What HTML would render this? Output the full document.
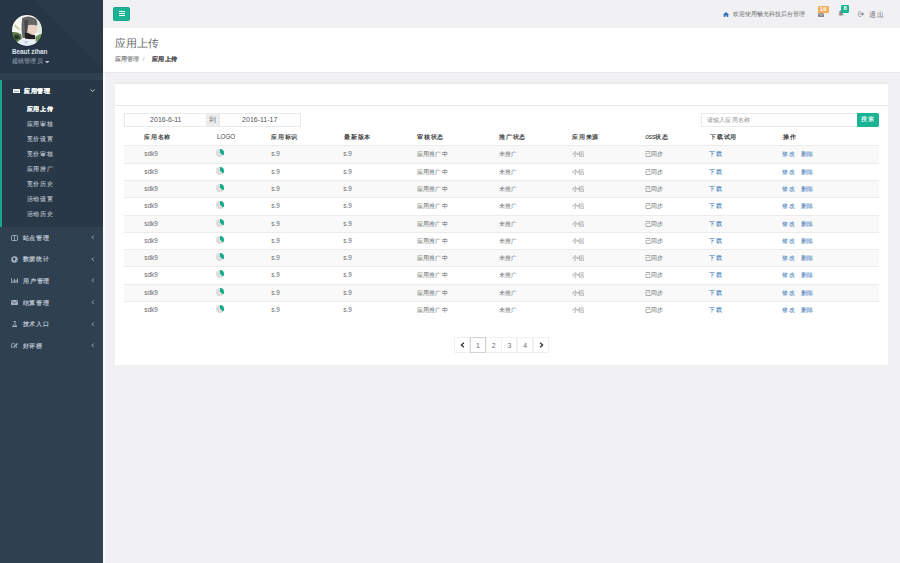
<!DOCTYPE html>
<html><head><meta charset="utf-8">
<style>
*{box-sizing:border-box;margin:0;padding:0}
html,body{width:900px;height:563px;overflow:hidden;background:#f1f1f3;font-family:"Liberation Sans",sans-serif;color:#676a6c;font-size:7px}
#side{position:absolute;left:0;top:0;width:103px;height:563px;background:#2f4050}
#hdr{position:absolute;left:0;top:0;width:103px;height:73px;background:linear-gradient(45deg,#263646 61%,#2a3a4a 61.5%);overflow:hidden}
#avatar{position:absolute;left:11.5px;top:15px;width:30.5px;height:30.5px;border-radius:50%;overflow:hidden;box-shadow:0 0 0 0.6px #1c2834}
#uname{position:absolute;left:12px;top:48px;color:#dfe4ed;font-size:6.3px;font-weight:bold;line-height:8px}
#urole{position:absolute;left:12px;top:57px;color:#aab3c0;font-size:6.1px;line-height:8px;letter-spacing:0.15px}
#menu{position:absolute;left:0;top:80px;width:103px}
.act{background:#293846;border-left:2px solid #19aa8d;height:146.5px;position:relative}
.mi{position:absolute;left:0;width:103px;height:10px;color:#bfc7d3;font-size:6.4px;font-weight:bold;line-height:10px}
.mi .t{position:absolute;left:22.6px;top:0.4px;font-size:5.9px;letter-spacing:0.65px}
.mi .ar{position:absolute}
.sub{position:absolute;left:26.7px;color:#bfc7d3;font-size:5.9px;line-height:10px;margin-top:-0.8px;letter-spacing:0.65px;-webkit-text-stroke:0.1px #bfc7d3}
#nav{position:absolute;left:103px;top:0;right:0;height:28px;background:#f1f1f3}
#tbtn{position:absolute;left:9.5px;top:6.5px;width:17.6px;height:14px;background:#1ab394;border:0.6px solid #17a386;border-radius:1.6px}
#tbtn i{position:absolute;left:5.3px;width:6px;height:0.9px;background:#fff}
#ph{position:absolute;left:103px;top:28px;right:0;height:44.9px;background:#fff;border-bottom:1px solid #e7eaec}
#ph h2{position:absolute;left:12px;top:7.8px;font-size:10.8px;font-weight:normal;color:#676a6c;line-height:14px}
#bc{position:absolute;left:12px;top:55.7px;font-size:6px;line-height:8px;color:#5a5c5e;-webkit-text-stroke:0.08px #5a5c5e}
#ibox{position:absolute;left:114.5px;top:82px;width:773.5px;height:283px;background:#fff;border-top:2px solid #e9ebed}
#ibt{position:absolute;left:0;top:0;right:0;height:22px;border-bottom:1px solid #e7eaec}
.row{position:absolute;left:9.5px;width:755px;height:17.3px;border-top:1px solid #ececed}
.row .c{position:absolute;top:0;line-height:15.2px;font-size:6.1px;color:#646668;letter-spacing:0.3px}
.row .lk{color:#2c6fb5}
.pie{position:absolute;top:3px;width:8px;height:8px;border-radius:50%;background:conic-gradient(#12ad85 0 34%,#dcdcdc 34% 100%)}
#thead{position:absolute;left:10px;top:47.6px;width:755px;height:13px}
#thead span{position:absolute;top:0;font-size:5.9px;font-weight:bold;color:#3d3d3d;line-height:10px;letter-spacing:0.7px}
.inp{position:absolute;top:28.6px;height:14px;border:1px solid #eaebec;background:#fff;font-size:7px;line-height:11.6px;text-align:center;color:#555}
#pg{position:absolute;left:339.6px;top:253px;height:16px}
#pg span{position:absolute;top:0;width:16px;height:16px;border:1px solid #f0f0f0;text-align:center;line-height:15.5px;font-size:6.9px;color:#6a6c6e}
</style></head><body>
<div id="side">
 <div id="hdr">
  <div id="avatar"><svg width="30.5" height="30.5" viewBox="0 0 30 30">
   <defs><filter id="bl" x="-20%" y="-20%" width="140%" height="140%"><feGaussianBlur stdDeviation="0.7"/></filter></defs>
   <g filter="url(#bl)">
   <rect x="-3" y="-3" width="36" height="36" fill="#f6f6f2"/>
   <rect x="23" y="3" width="10" height="15" fill="#e3e9da"/>
   <path d="M3 9 L8 14 L7 15 L2 11Z" fill="#bfd2a2"/>
   <path d="M-2 17 Q4 16 9 19 L10 25 L3 27 L-2 24Z" fill="#56744a"/>
   <path d="M2 20 L6 19.5 L8 23 L3 24Z" fill="#2a3526"/>
   <path d="M32 18 Q27 18.5 23.5 21 L23 26 L29 27 L32 24Z" fill="#6c9460"/>
   <path d="M10 3 Q17 -0.5 23.5 4 Q25 6 24.8 10 L22 11 Q19 9.5 15.8 10.5 L15 17 L13.5 22.5 L10.5 22.5 Q8.5 15 10 3Z" fill="#666"/>
   <path d="M12 6 Q14 4 16 5 L15 16 L13 20Z" fill="#4a4a4a"/>
   <path d="M15.8 10 Q20 8.8 24.5 10.5 L24.5 15 Q23.5 18.8 19.5 19 L15.3 17.5Z" fill="#e9d1c4"/>
   <path d="M12.5 17.5 L15.5 17.5 Q19 20 22.5 19.5 L23 23.5 L13 24.5Z" fill="#222"/>
   <path d="M4 31 Q6 23 12 23 L20 24 Q24 24.5 25 31Z" fill="#eaf0f7"/>
   <path d="M11 25 L16 26 L14 29Z" fill="#c4d2e4"/>
   </g>
  </svg></div>
  <div id="uname">Beaut zihan</div>
  <div id="urole">超级管理员<svg style="position:absolute;left:33px;top:3.6px" width="4.2" height="2.3" viewBox="0 0 9 5"><path d="M0 0 L9 0 L4.5 5Z" fill="#c3cad5"/></svg></div>
 </div>
 <div style="position:absolute;left:0;top:73px;width:103px;height:7px;background:#2f4050"></div>
 <div id="menu"><div class="act"></div></div>
 <div class="mi" style="top:86px;color:#fff"><svg style="position:absolute;left:12.8px;top:2.7px" width="7" height="4.6" viewBox="0 0 14 9"><rect width="14" height="9" fill="#fff"/><rect x="2" y="3.6" width="10" height="1.8" fill="#8a93a0"/></svg><span class="t" style="left:24px;font-size:6px;top:0px;letter-spacing:0.6px;-webkit-text-stroke:0.15px #fff">应用管理</span><svg class="ar" style="left:89.6px;top:2.6px" width="5" height="3.4" viewBox="0 0 10 7"><path d="M1 1.2 L5 5.2 L9 1.2" stroke="#e3e7ee" stroke-width="1.9" fill="none"/></svg></div>
 <div class="sub" style="top:105px;color:#fff;font-weight:bold;-webkit-text-stroke:0.1px #fff">应用上传</div>
 <div class="sub" style="top:120px">应用审核</div>
 <div class="sub" style="top:135px">竞价设置</div>
 <div class="sub" style="top:150px">竞价审核</div>
 <div class="sub" style="top:165px">应用推广</div>
 <div class="sub" style="top:180px">竞价历史</div>
 <div class="sub" style="top:195px">活动设置</div>
 <div class="sub" style="top:210px">活动历史</div>
 <div class="mi" style="top:232.3px"><svg style="position:absolute;left:11.3px;top:2.5px" width="7" height="6" viewBox="0 0 14 12"><rect x="1" y="1" width="12" height="10" rx="1.5" stroke="#a7b1c2" stroke-width="1.8" fill="none"/><rect x="6.2" y="1" width="1.6" height="10" fill="#a7b1c2"/></svg><span class="t">站点管理</span><svg class="ar" style="left:91.3px;top:3px" width="3.5" height="4.5" viewBox="0 0 7 9"><path d="M5.5 1 L2 4.5 L5.5 8" stroke="#a7b1c2" stroke-width="1.8" fill="none"/></svg></div>
 <div class="mi" style="top:253.8px"><svg style="position:absolute;left:10.9px;top:1.8px" width="7" height="7" viewBox="0 0 14 14"><circle cx="7" cy="7" r="6.5" fill="#a7b1c2"/><path d="M4 4 Q7 3 9 5 L8 8 Q6 9 6 11 L5 8 Q3 7 4 4Z" fill="#2f4050"/><path d="M10 9 L12 8 L11 11Z" fill="#2f4050"/></svg><span class="t">数据统计</span><svg class="ar" style="left:91.3px;top:3px" width="3.5" height="4.5" viewBox="0 0 7 9"><path d="M5.5 1 L2 4.5 L5.5 8" stroke="#a7b1c2" stroke-width="1.8" fill="none"/></svg></div>
 <div class="mi" style="top:275.4px"><svg style="position:absolute;left:11.2px;top:2.5px" width="7.5" height="5.5" viewBox="0 0 15 11"><path d="M1 0 L1 10 L15 10" stroke="#a7b1c2" stroke-width="1.6" fill="none"/><rect x="3" y="5" width="2" height="4" fill="#a7b1c2"/><rect x="6" y="2" width="2" height="7" fill="#a7b1c2"/><rect x="9" y="4" width="2" height="5" fill="#a7b1c2"/><rect x="12" y="1" width="2" height="8" fill="#a7b1c2"/></svg><span class="t" style="left:23.3px">用户管理</span><svg class="ar" style="left:91.3px;top:3px" width="3.5" height="4.5" viewBox="0 0 7 9"><path d="M5.5 1 L2 4.5 L5.5 8" stroke="#a7b1c2" stroke-width="1.8" fill="none"/></svg></div>
 <div class="mi" style="top:297.4px"><svg style="position:absolute;left:11.2px;top:2.7px" width="7" height="5.4" viewBox="0 0 14 11"><rect x="0" y="0" width="14" height="11" rx="1" fill="#a7b1c2"/><path d="M0.5 1.5 L7 6.5 L13.5 1.5" stroke="#2f4050" stroke-width="1.4" fill="none"/></svg><span class="t">结算管理</span><svg class="ar" style="left:91.3px;top:3px" width="3.5" height="4.5" viewBox="0 0 7 9"><path d="M5.5 1 L2 4.5 L5.5 8" stroke="#a7b1c2" stroke-width="1.8" fill="none"/></svg></div>
 <div class="mi" style="top:318.8px"><svg style="position:absolute;left:11.7px;top:1.8px" width="5.4" height="6.5" viewBox="0 0 11 13"><path d="M3 0 L8 0 L8 1.5 L7 1.5 L7 5 L11 12 L11 13 L0 13 L0 12 L4 5 L4 1.5 L3 1.5Z" fill="#a7b1c2"/><path d="M4.8 2 L6.2 2 L6.2 5.5 L8 9 L3 9 L4.8 5.5Z" fill="#2f4050"/></svg><span class="t">技术入口</span><svg class="ar" style="left:91.3px;top:3px" width="3.5" height="4.5" viewBox="0 0 7 9"><path d="M5.5 1 L2 4.5 L5.5 8" stroke="#a7b1c2" stroke-width="1.8" fill="none"/></svg></div>
 <div class="mi" style="top:340.3px"><svg style="position:absolute;left:11.2px;top:2.5px" width="7" height="5.6" viewBox="0 0 14 11"><path d="M8 1.5 L2 1.5 Q1 1.5 1 2.5 L1 9 Q1 10 2 10 L10 10 Q11 10 11 9 L11 6" stroke="#a7b1c2" stroke-width="1.6" fill="none"/><path d="M12 0 L14 2 L7 8.5 L4.5 9 L5 6.5Z" fill="#a7b1c2"/></svg><span class="t">好评榜</span><svg class="ar" style="left:91.3px;top:3px" width="3.5" height="4.5" viewBox="0 0 7 9"><path d="M5.5 1 L2 4.5 L5.5 8" stroke="#a7b1c2" stroke-width="1.8" fill="none"/></svg></div>
</div>
<div style="position:absolute;left:103px;top:0;width:2px;height:563px;background:#fbfbfb"></div>
<div id="nav"><div id="tbtn"><i style="top:3.9px"></i><i style="top:5.7px"></i><i style="top:7.6px"></i></div>
 <svg style="position:absolute;left:619.5px;top:11.5px" width="6" height="5" viewBox="0 0 12 10"><path d="M6 0 L12 5.5 L10.5 5.5 L10.5 10 L7.5 10 L7.5 7 L4.5 7 L4.5 10 L1.5 10 L1.5 5.5 L0 5.5Z" fill="#2f6db5"/></svg>
 <div style="position:absolute;left:630.2px;top:10px;font-size:6.1px;line-height:8px;color:#676a6c">欢迎使用畅充科技后台管理</div>
 <svg style="position:absolute;left:714.6px;top:11.5px" width="6.6" height="5.4" viewBox="0 0 13 10"><rect x="0" y="0" width="13" height="10" rx="1" fill="#888a8c"/><path d="M0.5 0.5 L6.5 6 L12.5 0.5" stroke="#f1f1f3" stroke-width="1.3" fill="none"/></svg>
 <div style="position:absolute;left:714.6px;top:5.6px;width:11.1px;height:7.4px;background:#f8ac59;border-radius:1.3px;color:#fff;font-size:6px;font-weight:bold;line-height:7.4px;text-align:center">16</div>
 <svg style="position:absolute;left:735.4px;top:10.4px" width="6" height="6.4" viewBox="0 0 12 12.8"><path d="M6 0.5 Q9.5 0.5 9.5 5 L9.5 8 L11.5 10.5 L0.5 10.5 L2.5 8 L2.5 5 Q2.5 0.5 6 0.5Z M4.5 11 Q6 13 7.5 11Z" fill="#888a8c"/></svg>
 <div style="position:absolute;left:738px;top:5.1px;width:8px;height:7.5px;background:#1ab394;border-radius:1.3px;color:#fff;font-size:5.8px;font-weight:bold;line-height:7.5px;text-align:center">8</div>
 <svg style="position:absolute;left:755px;top:10.9px" width="6.8" height="6.2" viewBox="0 0 14 13"><path d="M6 1.5 L3 1.5 Q1.2 1.5 1.2 3.3 L1.2 9.7 Q1.2 11.5 3 11.5 L6 11.5" stroke="#8c8e90" stroke-width="1.7" fill="none"/><path d="M4.5 5 L8 5 L8 2.3 L13 6.5 L8 10.7 L8 8 L4.5 8Z" fill="#8c8e90"/></svg>
 <div style="position:absolute;left:766px;top:9.6px;font-size:7.4px;line-height:9px;color:#6a6c6e;letter-spacing:0.9px">退出</div>
</div>
<div id="ph"><h2>应用上传</h2></div>
<div id="bc" style="position:absolute;left:115px;top:55px">应用管理 <span style="color:#ccc;margin:0 6px 0 2px">/</span> <b style="color:#333;font-size:6.2px;letter-spacing:0.25px">应用上传</b></div>
<div id="ibox">
 <div id="ibt"></div>
 <div class="inp" style="left:9.8px;width:83px">2016-6-11</div>
 <div class="inp" style="left:92.5px;width:11.7px;background:#eee;color:#676a6c">到</div>
 <div class="inp" style="left:104px;width:82.5px">2016-11-17</div>
 <div class="inp" style="left:586px;width:157px;text-align:left;padding-left:5.3px;color:#8f9193;font-size:6.3px;line-height:11.8px;letter-spacing:0.2px">请输入应用名称</div>
 <div class="inp" style="left:742.5px;width:21.5px;background:#1ab394;border-color:#1ab394;color:#fff;font-size:5.6px;letter-spacing:0.3px;border-radius:0 1.5px 1.5px 0;-webkit-text-stroke:0.1px #fff">搜索</div>
 <div id="thead">
  <span style="left:19.7px">应用名称</span><span style="left:92.5px;font-weight:normal;font-size:6.3px;letter-spacing:0;color:#4a4a4a;top:0.9px">LOGO</span><span style="left:146.7px">应用标识</span><span style="left:219.7px">最新版本</span>
  <span style="left:292.7px">审核状态</span><span style="left:374.7px">推广状态</span><span style="left:447.7px">应用来源</span><span style="left:520.7px"><i style="font-style:normal;letter-spacing:0;font-weight:normal;color:#333;font-size:6.5px">oss</i>状态</span>
  <span style="left:585.7px">下载试用</span><span style="left:658.7px">操作</span>
 </div>
<div class="row" style="top:61.3px;background:#f9f9f9"><span class="c" style="left:20.2px;font-size:6.4px;letter-spacing:0">sdk9</span><span class="pie" style="left:92.3px"></span><span class="c" style="left:147.3px;font-size:6.4px;letter-spacing:0">s.9</span><span class="c" style="left:219.3px;font-size:6.4px;letter-spacing:0">s.9</span><span class="c" style="left:292.6px">应用推广中</span><span class="c" style="left:374.6px">未推广</span><span class="c" style="left:447.6px">小侣</span><span class="c" style="left:520.6px">已同步</span><span class="c lk" style="left:585.4px">下载</span><span class="c lk" style="left:658.4px">修改</span><span class="c lk" style="left:677px">删除</span></div>
<div class="row" style="top:78.6px;background:#fff"><span class="c" style="left:20.2px;font-size:6.4px;letter-spacing:0">sdk9</span><span class="pie" style="left:92.3px"></span><span class="c" style="left:147.3px;font-size:6.4px;letter-spacing:0">s.9</span><span class="c" style="left:219.3px;font-size:6.4px;letter-spacing:0">s.9</span><span class="c" style="left:292.6px">应用推广中</span><span class="c" style="left:374.6px">未推广</span><span class="c" style="left:447.6px">小侣</span><span class="c" style="left:520.6px">已同步</span><span class="c lk" style="left:585.4px">下载</span><span class="c lk" style="left:658.4px">修改</span><span class="c lk" style="left:677px">删除</span></div>
<div class="row" style="top:95.9px;background:#f9f9f9"><span class="c" style="left:20.2px;font-size:6.4px;letter-spacing:0">sdk9</span><span class="pie" style="left:92.3px"></span><span class="c" style="left:147.3px;font-size:6.4px;letter-spacing:0">s.9</span><span class="c" style="left:219.3px;font-size:6.4px;letter-spacing:0">s.9</span><span class="c" style="left:292.6px">应用推广中</span><span class="c" style="left:374.6px">未推广</span><span class="c" style="left:447.6px">小侣</span><span class="c" style="left:520.6px">已同步</span><span class="c lk" style="left:585.4px">下载</span><span class="c lk" style="left:658.4px">修改</span><span class="c lk" style="left:677px">删除</span></div>
<div class="row" style="top:113.2px;background:#fff"><span class="c" style="left:20.2px;font-size:6.4px;letter-spacing:0">sdk9</span><span class="pie" style="left:92.3px"></span><span class="c" style="left:147.3px;font-size:6.4px;letter-spacing:0">s.9</span><span class="c" style="left:219.3px;font-size:6.4px;letter-spacing:0">s.9</span><span class="c" style="left:292.6px">应用推广中</span><span class="c" style="left:374.6px">未推广</span><span class="c" style="left:447.6px">小侣</span><span class="c" style="left:520.6px">已同步</span><span class="c lk" style="left:585.4px">下载</span><span class="c lk" style="left:658.4px">修改</span><span class="c lk" style="left:677px">删除</span></div>
<div class="row" style="top:130.5px;background:#f9f9f9"><span class="c" style="left:20.2px;font-size:6.4px;letter-spacing:0">sdk9</span><span class="pie" style="left:92.3px"></span><span class="c" style="left:147.3px;font-size:6.4px;letter-spacing:0">s.9</span><span class="c" style="left:219.3px;font-size:6.4px;letter-spacing:0">s.9</span><span class="c" style="left:292.6px">应用推广中</span><span class="c" style="left:374.6px">未推广</span><span class="c" style="left:447.6px">小侣</span><span class="c" style="left:520.6px">已同步</span><span class="c lk" style="left:585.4px">下载</span><span class="c lk" style="left:658.4px">修改</span><span class="c lk" style="left:677px">删除</span></div>
<div class="row" style="top:147.8px;background:#fff"><span class="c" style="left:20.2px;font-size:6.4px;letter-spacing:0">sdk9</span><span class="pie" style="left:92.3px"></span><span class="c" style="left:147.3px;font-size:6.4px;letter-spacing:0">s.9</span><span class="c" style="left:219.3px;font-size:6.4px;letter-spacing:0">s.9</span><span class="c" style="left:292.6px">应用推广中</span><span class="c" style="left:374.6px">未推广</span><span class="c" style="left:447.6px">小侣</span><span class="c" style="left:520.6px">已同步</span><span class="c lk" style="left:585.4px">下载</span><span class="c lk" style="left:658.4px">修改</span><span class="c lk" style="left:677px">删除</span></div>
<div class="row" style="top:165.1px;background:#f9f9f9"><span class="c" style="left:20.2px;font-size:6.4px;letter-spacing:0">sdk9</span><span class="pie" style="left:92.3px"></span><span class="c" style="left:147.3px;font-size:6.4px;letter-spacing:0">s.9</span><span class="c" style="left:219.3px;font-size:6.4px;letter-spacing:0">s.9</span><span class="c" style="left:292.6px">应用推广中</span><span class="c" style="left:374.6px">未推广</span><span class="c" style="left:447.6px">小侣</span><span class="c" style="left:520.6px">已同步</span><span class="c lk" style="left:585.4px">下载</span><span class="c lk" style="left:658.4px">修改</span><span class="c lk" style="left:677px">删除</span></div>
<div class="row" style="top:182.4px;background:#fff"><span class="c" style="left:20.2px;font-size:6.4px;letter-spacing:0">sdk9</span><span class="pie" style="left:92.3px"></span><span class="c" style="left:147.3px;font-size:6.4px;letter-spacing:0">s.9</span><span class="c" style="left:219.3px;font-size:6.4px;letter-spacing:0">s.9</span><span class="c" style="left:292.6px">应用推广中</span><span class="c" style="left:374.6px">未推广</span><span class="c" style="left:447.6px">小侣</span><span class="c" style="left:520.6px">已同步</span><span class="c lk" style="left:585.4px">下载</span><span class="c lk" style="left:658.4px">修改</span><span class="c lk" style="left:677px">删除</span></div>
<div class="row" style="top:199.7px;background:#f9f9f9"><span class="c" style="left:20.2px;font-size:6.4px;letter-spacing:0">sdk9</span><span class="pie" style="left:92.3px"></span><span class="c" style="left:147.3px;font-size:6.4px;letter-spacing:0">s.9</span><span class="c" style="left:219.3px;font-size:6.4px;letter-spacing:0">s.9</span><span class="c" style="left:292.6px">应用推广中</span><span class="c" style="left:374.6px">未推广</span><span class="c" style="left:447.6px">小侣</span><span class="c" style="left:520.6px">已同步</span><span class="c lk" style="left:585.4px">下载</span><span class="c lk" style="left:658.4px">修改</span><span class="c lk" style="left:677px">删除</span></div>
<div class="row" style="top:217.0px;background:#fff"><span class="c" style="left:20.2px;font-size:6.4px;letter-spacing:0">sdk9</span><span class="pie" style="left:92.3px"></span><span class="c" style="left:147.3px;font-size:6.4px;letter-spacing:0">s.9</span><span class="c" style="left:219.3px;font-size:6.4px;letter-spacing:0">s.9</span><span class="c" style="left:292.6px">应用推广中</span><span class="c" style="left:374.6px">未推广</span><span class="c" style="left:447.6px">小侣</span><span class="c" style="left:520.6px">已同步</span><span class="c lk" style="left:585.4px">下载</span><span class="c lk" style="left:658.4px">修改</span><span class="c lk" style="left:677px">删除</span></div>

 <div id="pg">
  <span style="left:0"><svg style="position:absolute;left:5.2px;top:4.3px" width="5" height="6" viewBox="0 0 9 11"><path d="M7 1.2 L2.5 5.5 L7 9.8" stroke="#333" stroke-width="2.4" fill="none"/></svg></span><span style="left:15.8px;border-color:#d4d4d4">1</span><span style="left:31.6px">2</span><span style="left:47.4px">3</span><span style="left:63.2px">4</span><span style="left:79px"><svg style="position:absolute;left:5.2px;top:4.3px" width="5" height="6" viewBox="0 0 9 11"><path d="M2 1.2 L6.5 5.5 L2 9.8" stroke="#333" stroke-width="2.4" fill="none"/></svg></span>
 </div>
</div>
</body></html>
